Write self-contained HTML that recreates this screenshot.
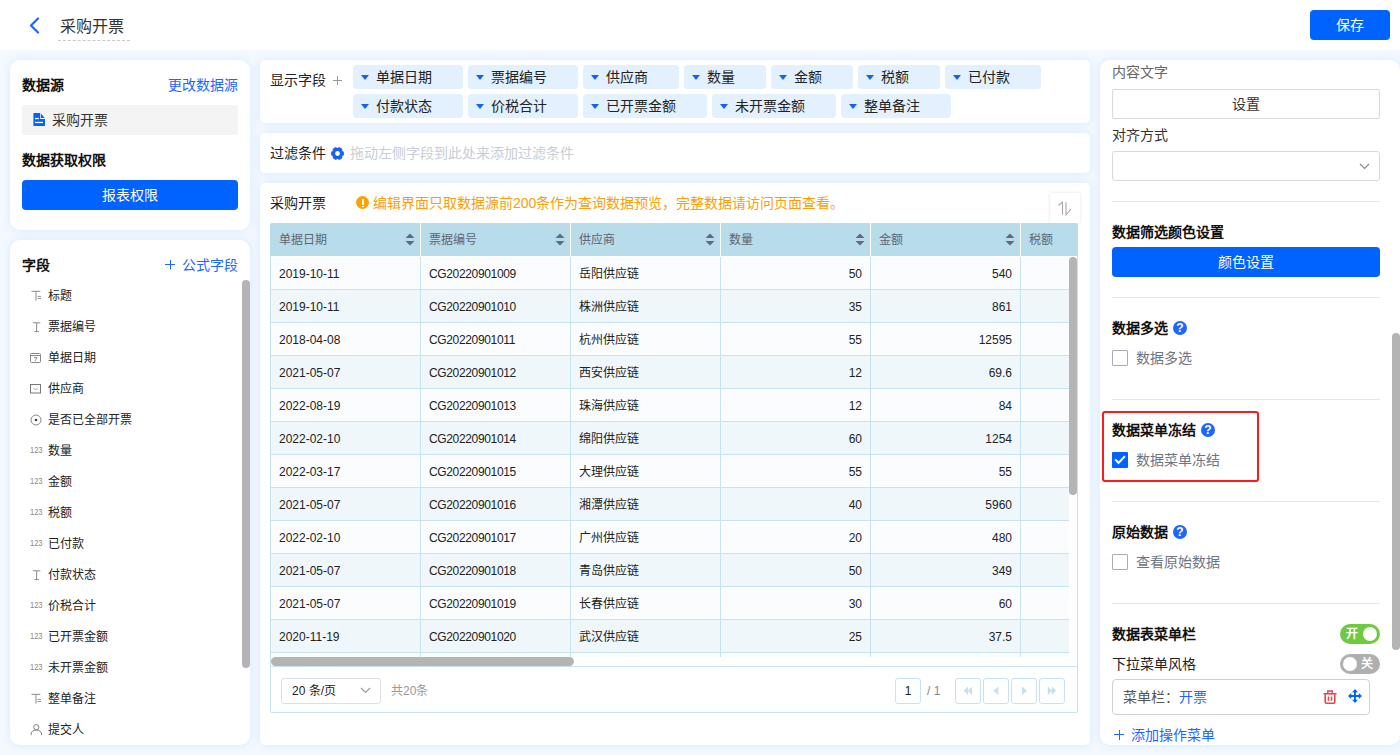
<!DOCTYPE html><html lang="zh-CN"><head><meta charset="utf-8"><style>
*{box-sizing:border-box;margin:0;padding:0}
html,body{width:1400px;height:755px;overflow:hidden}
body{position:relative;background:#F4F9FF;font-family:"Liberation Sans",sans-serif;color:#333;font-size:14px}
.abs{position:absolute}
.t{position:absolute;white-space:nowrap;line-height:16px;height:16px}
.s12{font-size:12px;line-height:14px;height:14px}
.b{font-weight:bold;color:#111}
.panel{position:absolute;background:#fff;box-shadow:0 0 10px rgba(70,150,250,0.16)}
.blue{color:#1F66FF}
.btn{position:absolute;background:#0062FF;color:#fff;border-radius:4px;text-align:center;font-size:14px}
.chip{position:absolute;height:24px;background:#E3F0FD;border-radius:4px}
.chip i{position:absolute;left:8px;top:10px;width:0;height:0;border-left:4px solid transparent;border-right:4px solid transparent;border-top:5px solid #1560F5}
.chip span{position:absolute;left:23px;top:4px;line-height:16px;white-space:nowrap;color:#222}
.div{position:absolute;left:1112px;width:268px;height:1px;background:#E6E6E6}
.q{position:absolute;width:14px;height:14px;border-radius:50%;background:#1F66FF;color:#fff;font-size:11px;line-height:14px;text-align:center;font-weight:bold}
.cb{position:absolute;left:1112px;width:16px;height:16px;border:1px solid #A5ACB8;border-radius:1px;background:#fff}
.sb{position:absolute;background:#B4B4B4;border-radius:4px}
</style></head><body>
<div class="abs" style="left:0;top:0;width:1400px;height:50px;background:#fff"></div>
<svg class="abs" style="left:28px;top:17px" width="12" height="17" viewBox="0 0 12 17"><path d="M10 1.5 L3 8.5 L10 15.5" fill="none" stroke="#1F66FF" stroke-width="2.2" stroke-linecap="round" stroke-linejoin="round"/></svg>
<div class="t" style="left:60px;top:18px;font-size:16px;line-height:18px;height:18px;color:#333">采购开票</div>
<div class="abs" style="left:58px;top:40px;width:72px;height:0;border-top:1px dashed #C8C8C8"></div>
<div class="btn" style="left:1310px;top:10px;width:80px;height:30px;line-height:30px">保存</div>
<div class="panel" style="left:10px;top:60px;width:240px;height:170px;border-radius:10px"></div>
<div class="t b" style="left:22px;top:77px">数据源</div>
<div class="t blue" style="left:168px;top:77px">更改数据源</div>
<div class="abs" style="left:22px;top:105px;width:216px;height:30px;background:#F4F4F4;border-radius:2px"></div>
<svg class="abs" style="left:33px;top:113px" width="12" height="13" viewBox="0 0 12 13"><path d="M0.4 0 H7.2 V6 H12 V13 H0.4 Z" fill="#0062FF"/><path d="M8 0.6 L8 5 L11.6 5 Z" fill="#0062FF"/><rect x="2" y="4.9" width="3.8" height="1.3" fill="#fff"/><rect x="2" y="8.8" width="8" height="1.3" fill="#fff"/></svg>
<div class="t" style="left:52px;top:112px">采购开票</div>
<div class="t b" style="left:22px;top:152px">数据获取权限</div>
<div class="btn" style="left:22px;top:180px;width:216px;height:30px;line-height:30px">报表权限</div>
<div class="panel" style="left:10px;top:240px;width:240px;height:505px;border-radius:10px"></div>
<div class="t b" style="left:22px;top:257px">字段</div>
<svg class="abs" style="left:165px;top:260px" width="10" height="10" viewBox="0 0 10 10"><path d="M5.5 0 V9.5 M0 4.5 H10.5" stroke="#1F66FF" stroke-width="1"/></svg>
<div class="t blue" style="left:182px;top:257px">公式字段</div>
<div class="abs" style="left:30px;top:290.0px;width:12px;height:11px;line-height:11px"><svg width="12" height="12" viewBox="0 0 12 12"><path d="M1.5 1.3 H10.3 M6 1.3 V10.6" stroke="#8A8A8A" stroke-width="1" fill="none"/><path d="M7.5 6.4 H11 M7.5 8.5 H11" stroke="#888" stroke-width="0.9" fill="none"/></svg></div>
<div class="t s12" style="left:48px;top:288.5px;color:#222">标题</div>
<div class="abs" style="left:30px;top:321.0px;width:12px;height:11px;line-height:11px"><svg width="12" height="12" viewBox="0 0 12 12"><path d="M3 1.8 H10.3 M6.6 1.8 V10.6 M4.3 10.6 H8.9" stroke="#8A8A8A" stroke-width="1" fill="none"/></svg></div>
<div class="t s12" style="left:48px;top:319.5px;color:#222">票据编号</div>
<div class="abs" style="left:30px;top:352.0px;width:12px;height:11px;line-height:11px"><svg width="11" height="11" viewBox="0 0 11 11"><rect x="0.5" y="1.5" width="10" height="9" rx="1" stroke="#888" fill="none"/><path d="M0.5 3.5 H10.5" stroke="#888"/><path d="M4 5.5 H7 L5 9" stroke="#888" stroke-width="0.9" fill="none"/></svg></div>
<div class="t s12" style="left:48px;top:350.5px;color:#222">单据日期</div>
<div class="abs" style="left:30px;top:383.0px;width:12px;height:11px;line-height:11px"><svg width="11" height="11" viewBox="0 0 11 11"><rect x="0.5" y="1.5" width="10" height="8.5" stroke="#777" fill="none"/><path d="M3.5 5 L5.5 7 L7.5 5" stroke="#999" stroke-width="0.9" fill="none"/></svg></div>
<div class="t s12" style="left:48px;top:381.5px;color:#222">供应商</div>
<div class="abs" style="left:30px;top:414.0px;width:12px;height:11px;line-height:11px"><svg width="12" height="12" viewBox="0 0 12 12"><circle cx="6" cy="6" r="5" stroke="#888" fill="none"/><circle cx="6" cy="6" r="1.3" fill="#444"/></svg></div>
<div class="t s12" style="left:48px;top:412.5px;color:#222">是否已全部开票</div>
<div class="abs" style="left:30px;top:445.0px;width:12px;height:11px;line-height:11px"><svg width="13" height="11" viewBox="0 0 13 11"><text x="0" y="7.7" font-size="8.4" fill="#888" textLength="12.5" lengthAdjust="spacingAndGlyphs" font-family="Liberation Sans">123</text></svg></div>
<div class="t s12" style="left:48px;top:443.5px;color:#222">数量</div>
<div class="abs" style="left:30px;top:476.0px;width:12px;height:11px;line-height:11px"><svg width="13" height="11" viewBox="0 0 13 11"><text x="0" y="7.7" font-size="8.4" fill="#888" textLength="12.5" lengthAdjust="spacingAndGlyphs" font-family="Liberation Sans">123</text></svg></div>
<div class="t s12" style="left:48px;top:474.5px;color:#222">金额</div>
<div class="abs" style="left:30px;top:507.0px;width:12px;height:11px;line-height:11px"><svg width="13" height="11" viewBox="0 0 13 11"><text x="0" y="7.7" font-size="8.4" fill="#888" textLength="12.5" lengthAdjust="spacingAndGlyphs" font-family="Liberation Sans">123</text></svg></div>
<div class="t s12" style="left:48px;top:505.5px;color:#222">税额</div>
<div class="abs" style="left:30px;top:538.0px;width:12px;height:11px;line-height:11px"><svg width="13" height="11" viewBox="0 0 13 11"><text x="0" y="7.7" font-size="8.4" fill="#888" textLength="12.5" lengthAdjust="spacingAndGlyphs" font-family="Liberation Sans">123</text></svg></div>
<div class="t s12" style="left:48px;top:536.5px;color:#222">已付款</div>
<div class="abs" style="left:30px;top:569.0px;width:12px;height:11px;line-height:11px"><svg width="12" height="12" viewBox="0 0 12 12"><path d="M3 1.8 H10.3 M6.6 1.8 V10.6 M4.3 10.6 H8.9" stroke="#8A8A8A" stroke-width="1" fill="none"/></svg></div>
<div class="t s12" style="left:48px;top:567.5px;color:#222">付款状态</div>
<div class="abs" style="left:30px;top:600.0px;width:12px;height:11px;line-height:11px"><svg width="13" height="11" viewBox="0 0 13 11"><text x="0" y="7.7" font-size="8.4" fill="#888" textLength="12.5" lengthAdjust="spacingAndGlyphs" font-family="Liberation Sans">123</text></svg></div>
<div class="t s12" style="left:48px;top:598.5px;color:#222">价税合计</div>
<div class="abs" style="left:30px;top:631.0px;width:12px;height:11px;line-height:11px"><svg width="13" height="11" viewBox="0 0 13 11"><text x="0" y="7.7" font-size="8.4" fill="#888" textLength="12.5" lengthAdjust="spacingAndGlyphs" font-family="Liberation Sans">123</text></svg></div>
<div class="t s12" style="left:48px;top:629.5px;color:#222">已开票金额</div>
<div class="abs" style="left:30px;top:662.0px;width:12px;height:11px;line-height:11px"><svg width="13" height="11" viewBox="0 0 13 11"><text x="0" y="7.7" font-size="8.4" fill="#888" textLength="12.5" lengthAdjust="spacingAndGlyphs" font-family="Liberation Sans">123</text></svg></div>
<div class="t s12" style="left:48px;top:660.5px;color:#222">未开票金额</div>
<div class="abs" style="left:30px;top:693.0px;width:12px;height:11px;line-height:11px"><svg width="12" height="12" viewBox="0 0 12 12"><path d="M1.5 1.3 H10.3 M6 1.3 V10.6" stroke="#8A8A8A" stroke-width="1" fill="none"/><path d="M7.5 6.4 H11 M7.5 8.5 H11" stroke="#888" stroke-width="0.9" fill="none"/></svg></div>
<div class="t s12" style="left:48px;top:691.5px;color:#222">整单备注</div>
<div class="abs" style="left:30px;top:724.0px;width:12px;height:11px;line-height:11px"><svg width="13" height="12" viewBox="0 0 13 12"><circle cx="6.3" cy="3.2" r="2.6" stroke="#7A7A7A" stroke-width="0.95" fill="none"/><path d="M1 11.2 Q1 6 6.3 6 Q11.6 6 11.6 11.2" stroke="#7A7A7A" stroke-width="0.95" fill="none"/></svg></div>
<div class="t s12" style="left:48px;top:722.5px;color:#222">提交人</div>
<div class="sb" style="left:242px;top:280px;width:8px;height:388px"></div>
<div class="panel" style="left:260px;top:60px;width:830px;height:63px;border-radius:5px"></div>
<div class="t" style="left:270px;top:72px;color:#222">显示字段</div>
<svg class="abs" style="left:333px;top:76px" width="9" height="9" viewBox="0 0 9 9"><path d="M4.5 0 V9 M0 4.5 H9" stroke="#999" stroke-width="1"/></svg>
<div class="chip" style="left:353px;top:65px;width:110px"><i></i><span>单据日期</span></div>
<div class="chip" style="left:468px;top:65px;width:110px"><i></i><span>票据编号</span></div>
<div class="chip" style="left:583px;top:65px;width:96px"><i></i><span>供应商</span></div>
<div class="chip" style="left:684px;top:65px;width:82px"><i></i><span>数量</span></div>
<div class="chip" style="left:771px;top:65px;width:82px"><i></i><span>金额</span></div>
<div class="chip" style="left:858px;top:65px;width:82px"><i></i><span>税额</span></div>
<div class="chip" style="left:945px;top:65px;width:96px"><i></i><span>已付款</span></div>
<div class="chip" style="left:353px;top:94px;width:110px"><i></i><span>付款状态</span></div>
<div class="chip" style="left:468px;top:94px;width:110px"><i></i><span>价税合计</span></div>
<div class="chip" style="left:583px;top:94px;width:124px"><i></i><span>已开票金额</span></div>
<div class="chip" style="left:712px;top:94px;width:124px"><i></i><span>未开票金额</span></div>
<div class="chip" style="left:841px;top:94px;width:110px"><i></i><span>整单备注</span></div>
<div class="panel" style="left:260px;top:133px;width:830px;height:40px;border-radius:5px"></div>
<div class="t" style="left:270px;top:145px;color:#222">过滤条件</div>
<svg class="abs" style="left:331px;top:146.5px" width="13" height="13" viewBox="0 0 13 13"><path d="M10.66 3.90 L12.71 4.95 L12.71 8.05 L10.66 9.10 L10.83 8.80 L10.95 11.10 L8.26 12.65 L6.33 11.40 L6.67 11.40 L4.74 12.65 L2.05 11.10 L2.17 8.80 L2.34 9.10 L0.29 8.05 L0.29 4.95 L2.34 3.90 L2.17 4.20 L2.05 1.90 L4.74 0.35 L6.67 1.60 L6.33 1.60 L8.26 0.35 L10.95 1.90 L10.83 4.20 Z" fill="#1560F5" stroke="#1560F5" stroke-width="0.6" stroke-linejoin="round"/><circle cx="6.5" cy="6.5" r="2.4" fill="#fff"/></svg>
<div class="t" style="left:350px;top:145px;color:#C8CDD6">拖动左侧字段到此处来添加过滤条件</div>
<div class="panel" style="left:260px;top:183px;width:830px;height:562px;border-radius:5px"></div>
<div class="t" style="left:270px;top:195px;color:#222">采购开票</div>
<div class="abs" style="left:356px;top:196px;width:13px;height:13px;border-radius:50%;background:#F9A308"></div>
<div class="abs" style="left:361.6px;top:198.5px;width:2px;height:6px;background:#fff;border-radius:1px"></div>
<div class="abs" style="left:361.6px;top:205.5px;width:2px;height:1.8px;background:#fff"></div>
<div class="t" style="left:373px;top:195px;color:#F7A00A">编辑界面只取数据源前200条作为查询数据预览，完整数据请访问页面查看。</div>
<div class="abs" style="left:1050px;top:193px;width:30px;height:30px;background:#fff;box-shadow:0 0 3px rgba(0,0,0,0.12)"></div>
<svg class="abs" style="left:1057px;top:201px" width="15" height="15" viewBox="0 0 15 15"><path d="M1.5 4.5 L5.5 1.2 L5.5 13.8" stroke="#A8A8A8" stroke-width="1.1" fill="none"/><path d="M9 1.2 L9 13.8 L14 8" stroke="#A8A8A8" stroke-width="1.1" fill="none"/></svg>
<div class="abs" style="left:270px;top:223px;width:808px;height:490px;border:1px solid #C7E3EF;border-radius:2px;background:#fff"></div>
<div class="abs" style="left:270px;top:223px;width:808px;height:33px;background:#B9DCEB;border-radius:2px 2px 0 0"></div>
<div class="t s12" style="left:279px;top:233px;color:#5E6470">单据日期</div>
<div class="abs" style="left:420px;top:223px;width:1px;height:33px;background:#fff"></div>
<svg class="abs" style="left:405px;top:233px" width="10" height="13" viewBox="0 0 10 13"><path d="M5 0.5 L9.5 5 L0.5 5 Z M5 12.5 L9.5 8 L0.5 8 Z" fill="#5F6B80"/></svg>
<div class="t s12" style="left:429px;top:233px;color:#5E6470">票据编号</div>
<div class="abs" style="left:570px;top:223px;width:1px;height:33px;background:#fff"></div>
<svg class="abs" style="left:555px;top:233px" width="10" height="13" viewBox="0 0 10 13"><path d="M5 0.5 L9.5 5 L0.5 5 Z M5 12.5 L9.5 8 L0.5 8 Z" fill="#5F6B80"/></svg>
<div class="t s12" style="left:579px;top:233px;color:#5E6470">供应商</div>
<div class="abs" style="left:720px;top:223px;width:1px;height:33px;background:#fff"></div>
<svg class="abs" style="left:705px;top:233px" width="10" height="13" viewBox="0 0 10 13"><path d="M5 0.5 L9.5 5 L0.5 5 Z M5 12.5 L9.5 8 L0.5 8 Z" fill="#5F6B80"/></svg>
<div class="t s12" style="left:729px;top:233px;color:#5E6470">数量</div>
<div class="abs" style="left:870px;top:223px;width:1px;height:33px;background:#fff"></div>
<svg class="abs" style="left:855px;top:233px" width="10" height="13" viewBox="0 0 10 13"><path d="M5 0.5 L9.5 5 L0.5 5 Z M5 12.5 L9.5 8 L0.5 8 Z" fill="#5F6B80"/></svg>
<div class="t s12" style="left:879px;top:233px;color:#5E6470">金额</div>
<div class="abs" style="left:1020px;top:223px;width:1px;height:33px;background:#fff"></div>
<svg class="abs" style="left:1005px;top:233px" width="10" height="13" viewBox="0 0 10 13"><path d="M5 0.5 L9.5 5 L0.5 5 Z M5 12.5 L9.5 8 L0.5 8 Z" fill="#5F6B80"/></svg>
<div class="t s12" style="left:1029px;top:233px;color:#5E6470">税额</div>
<div class="abs" style="left:271px;top:257px;width:798px;height:400px;overflow:hidden">
<div class="abs" style="left:0;top:0px;width:798px;height:33px;background:#FAFCFE;border-bottom:1px solid #C7E3EF"></div>
<div class="abs" style="left:149px;top:0px;width:1px;height:33px;background:#C7E3EF"></div>
<div class="abs" style="left:299px;top:0px;width:1px;height:33px;background:#C7E3EF"></div>
<div class="abs" style="left:449px;top:0px;width:1px;height:33px;background:#C7E3EF"></div>
<div class="abs" style="left:599px;top:0px;width:1px;height:33px;background:#C7E3EF"></div>
<div class="abs" style="left:749px;top:0px;width:1px;height:33px;background:#C7E3EF"></div>
<div class="t s12" style="left:8px;top:10px;color:#222">2019-10-11</div>
<div class="t s12" style="left:158px;top:10px;color:#222;letter-spacing:-0.35px">CG20220901009</div>
<div class="t s12" style="left:308px;top:10px;color:#222">岳阳供应链</div>
<div class="t s12" style="left:450px;top:10px;width:141px;text-align:right;color:#222">50</div>
<div class="t s12" style="left:600px;top:10px;width:141px;text-align:right;color:#222">540</div>
<div class="abs" style="left:0;top:33px;width:798px;height:33px;background:#EFF7FA;border-bottom:1px solid #C7E3EF"></div>
<div class="abs" style="left:149px;top:33px;width:1px;height:33px;background:#C7E3EF"></div>
<div class="abs" style="left:299px;top:33px;width:1px;height:33px;background:#C7E3EF"></div>
<div class="abs" style="left:449px;top:33px;width:1px;height:33px;background:#C7E3EF"></div>
<div class="abs" style="left:599px;top:33px;width:1px;height:33px;background:#C7E3EF"></div>
<div class="abs" style="left:749px;top:33px;width:1px;height:33px;background:#C7E3EF"></div>
<div class="t s12" style="left:8px;top:43px;color:#222">2019-10-11</div>
<div class="t s12" style="left:158px;top:43px;color:#222;letter-spacing:-0.35px">CG20220901010</div>
<div class="t s12" style="left:308px;top:43px;color:#222">株洲供应链</div>
<div class="t s12" style="left:450px;top:43px;width:141px;text-align:right;color:#222">35</div>
<div class="t s12" style="left:600px;top:43px;width:141px;text-align:right;color:#222">861</div>
<div class="abs" style="left:0;top:66px;width:798px;height:33px;background:#FAFCFE;border-bottom:1px solid #C7E3EF"></div>
<div class="abs" style="left:149px;top:66px;width:1px;height:33px;background:#C7E3EF"></div>
<div class="abs" style="left:299px;top:66px;width:1px;height:33px;background:#C7E3EF"></div>
<div class="abs" style="left:449px;top:66px;width:1px;height:33px;background:#C7E3EF"></div>
<div class="abs" style="left:599px;top:66px;width:1px;height:33px;background:#C7E3EF"></div>
<div class="abs" style="left:749px;top:66px;width:1px;height:33px;background:#C7E3EF"></div>
<div class="t s12" style="left:8px;top:76px;color:#222">2018-04-08</div>
<div class="t s12" style="left:158px;top:76px;color:#222;letter-spacing:-0.35px">CG20220901011</div>
<div class="t s12" style="left:308px;top:76px;color:#222">杭州供应链</div>
<div class="t s12" style="left:450px;top:76px;width:141px;text-align:right;color:#222">55</div>
<div class="t s12" style="left:600px;top:76px;width:141px;text-align:right;color:#222">12595</div>
<div class="abs" style="left:0;top:99px;width:798px;height:33px;background:#EFF7FA;border-bottom:1px solid #C7E3EF"></div>
<div class="abs" style="left:149px;top:99px;width:1px;height:33px;background:#C7E3EF"></div>
<div class="abs" style="left:299px;top:99px;width:1px;height:33px;background:#C7E3EF"></div>
<div class="abs" style="left:449px;top:99px;width:1px;height:33px;background:#C7E3EF"></div>
<div class="abs" style="left:599px;top:99px;width:1px;height:33px;background:#C7E3EF"></div>
<div class="abs" style="left:749px;top:99px;width:1px;height:33px;background:#C7E3EF"></div>
<div class="t s12" style="left:8px;top:109px;color:#222">2021-05-07</div>
<div class="t s12" style="left:158px;top:109px;color:#222;letter-spacing:-0.35px">CG20220901012</div>
<div class="t s12" style="left:308px;top:109px;color:#222">西安供应链</div>
<div class="t s12" style="left:450px;top:109px;width:141px;text-align:right;color:#222">12</div>
<div class="t s12" style="left:600px;top:109px;width:141px;text-align:right;color:#222">69.6</div>
<div class="abs" style="left:0;top:132px;width:798px;height:33px;background:#FAFCFE;border-bottom:1px solid #C7E3EF"></div>
<div class="abs" style="left:149px;top:132px;width:1px;height:33px;background:#C7E3EF"></div>
<div class="abs" style="left:299px;top:132px;width:1px;height:33px;background:#C7E3EF"></div>
<div class="abs" style="left:449px;top:132px;width:1px;height:33px;background:#C7E3EF"></div>
<div class="abs" style="left:599px;top:132px;width:1px;height:33px;background:#C7E3EF"></div>
<div class="abs" style="left:749px;top:132px;width:1px;height:33px;background:#C7E3EF"></div>
<div class="t s12" style="left:8px;top:142px;color:#222">2022-08-19</div>
<div class="t s12" style="left:158px;top:142px;color:#222;letter-spacing:-0.35px">CG20220901013</div>
<div class="t s12" style="left:308px;top:142px;color:#222">珠海供应链</div>
<div class="t s12" style="left:450px;top:142px;width:141px;text-align:right;color:#222">12</div>
<div class="t s12" style="left:600px;top:142px;width:141px;text-align:right;color:#222">84</div>
<div class="abs" style="left:0;top:165px;width:798px;height:33px;background:#EFF7FA;border-bottom:1px solid #C7E3EF"></div>
<div class="abs" style="left:149px;top:165px;width:1px;height:33px;background:#C7E3EF"></div>
<div class="abs" style="left:299px;top:165px;width:1px;height:33px;background:#C7E3EF"></div>
<div class="abs" style="left:449px;top:165px;width:1px;height:33px;background:#C7E3EF"></div>
<div class="abs" style="left:599px;top:165px;width:1px;height:33px;background:#C7E3EF"></div>
<div class="abs" style="left:749px;top:165px;width:1px;height:33px;background:#C7E3EF"></div>
<div class="t s12" style="left:8px;top:175px;color:#222">2022-02-10</div>
<div class="t s12" style="left:158px;top:175px;color:#222;letter-spacing:-0.35px">CG20220901014</div>
<div class="t s12" style="left:308px;top:175px;color:#222">绵阳供应链</div>
<div class="t s12" style="left:450px;top:175px;width:141px;text-align:right;color:#222">60</div>
<div class="t s12" style="left:600px;top:175px;width:141px;text-align:right;color:#222">1254</div>
<div class="abs" style="left:0;top:198px;width:798px;height:33px;background:#FAFCFE;border-bottom:1px solid #C7E3EF"></div>
<div class="abs" style="left:149px;top:198px;width:1px;height:33px;background:#C7E3EF"></div>
<div class="abs" style="left:299px;top:198px;width:1px;height:33px;background:#C7E3EF"></div>
<div class="abs" style="left:449px;top:198px;width:1px;height:33px;background:#C7E3EF"></div>
<div class="abs" style="left:599px;top:198px;width:1px;height:33px;background:#C7E3EF"></div>
<div class="abs" style="left:749px;top:198px;width:1px;height:33px;background:#C7E3EF"></div>
<div class="t s12" style="left:8px;top:208px;color:#222">2022-03-17</div>
<div class="t s12" style="left:158px;top:208px;color:#222;letter-spacing:-0.35px">CG20220901015</div>
<div class="t s12" style="left:308px;top:208px;color:#222">大理供应链</div>
<div class="t s12" style="left:450px;top:208px;width:141px;text-align:right;color:#222">55</div>
<div class="t s12" style="left:600px;top:208px;width:141px;text-align:right;color:#222">55</div>
<div class="abs" style="left:0;top:231px;width:798px;height:33px;background:#EFF7FA;border-bottom:1px solid #C7E3EF"></div>
<div class="abs" style="left:149px;top:231px;width:1px;height:33px;background:#C7E3EF"></div>
<div class="abs" style="left:299px;top:231px;width:1px;height:33px;background:#C7E3EF"></div>
<div class="abs" style="left:449px;top:231px;width:1px;height:33px;background:#C7E3EF"></div>
<div class="abs" style="left:599px;top:231px;width:1px;height:33px;background:#C7E3EF"></div>
<div class="abs" style="left:749px;top:231px;width:1px;height:33px;background:#C7E3EF"></div>
<div class="t s12" style="left:8px;top:241px;color:#222">2021-05-07</div>
<div class="t s12" style="left:158px;top:241px;color:#222;letter-spacing:-0.35px">CG20220901016</div>
<div class="t s12" style="left:308px;top:241px;color:#222">湘潭供应链</div>
<div class="t s12" style="left:450px;top:241px;width:141px;text-align:right;color:#222">40</div>
<div class="t s12" style="left:600px;top:241px;width:141px;text-align:right;color:#222">5960</div>
<div class="abs" style="left:0;top:264px;width:798px;height:33px;background:#FAFCFE;border-bottom:1px solid #C7E3EF"></div>
<div class="abs" style="left:149px;top:264px;width:1px;height:33px;background:#C7E3EF"></div>
<div class="abs" style="left:299px;top:264px;width:1px;height:33px;background:#C7E3EF"></div>
<div class="abs" style="left:449px;top:264px;width:1px;height:33px;background:#C7E3EF"></div>
<div class="abs" style="left:599px;top:264px;width:1px;height:33px;background:#C7E3EF"></div>
<div class="abs" style="left:749px;top:264px;width:1px;height:33px;background:#C7E3EF"></div>
<div class="t s12" style="left:8px;top:274px;color:#222">2022-02-10</div>
<div class="t s12" style="left:158px;top:274px;color:#222;letter-spacing:-0.35px">CG20220901017</div>
<div class="t s12" style="left:308px;top:274px;color:#222">广州供应链</div>
<div class="t s12" style="left:450px;top:274px;width:141px;text-align:right;color:#222">20</div>
<div class="t s12" style="left:600px;top:274px;width:141px;text-align:right;color:#222">480</div>
<div class="abs" style="left:0;top:297px;width:798px;height:33px;background:#EFF7FA;border-bottom:1px solid #C7E3EF"></div>
<div class="abs" style="left:149px;top:297px;width:1px;height:33px;background:#C7E3EF"></div>
<div class="abs" style="left:299px;top:297px;width:1px;height:33px;background:#C7E3EF"></div>
<div class="abs" style="left:449px;top:297px;width:1px;height:33px;background:#C7E3EF"></div>
<div class="abs" style="left:599px;top:297px;width:1px;height:33px;background:#C7E3EF"></div>
<div class="abs" style="left:749px;top:297px;width:1px;height:33px;background:#C7E3EF"></div>
<div class="t s12" style="left:8px;top:307px;color:#222">2021-05-07</div>
<div class="t s12" style="left:158px;top:307px;color:#222;letter-spacing:-0.35px">CG20220901018</div>
<div class="t s12" style="left:308px;top:307px;color:#222">青岛供应链</div>
<div class="t s12" style="left:450px;top:307px;width:141px;text-align:right;color:#222">50</div>
<div class="t s12" style="left:600px;top:307px;width:141px;text-align:right;color:#222">349</div>
<div class="abs" style="left:0;top:330px;width:798px;height:33px;background:#FAFCFE;border-bottom:1px solid #C7E3EF"></div>
<div class="abs" style="left:149px;top:330px;width:1px;height:33px;background:#C7E3EF"></div>
<div class="abs" style="left:299px;top:330px;width:1px;height:33px;background:#C7E3EF"></div>
<div class="abs" style="left:449px;top:330px;width:1px;height:33px;background:#C7E3EF"></div>
<div class="abs" style="left:599px;top:330px;width:1px;height:33px;background:#C7E3EF"></div>
<div class="abs" style="left:749px;top:330px;width:1px;height:33px;background:#C7E3EF"></div>
<div class="t s12" style="left:8px;top:340px;color:#222">2021-05-07</div>
<div class="t s12" style="left:158px;top:340px;color:#222;letter-spacing:-0.35px">CG20220901019</div>
<div class="t s12" style="left:308px;top:340px;color:#222">长春供应链</div>
<div class="t s12" style="left:450px;top:340px;width:141px;text-align:right;color:#222">30</div>
<div class="t s12" style="left:600px;top:340px;width:141px;text-align:right;color:#222">60</div>
<div class="abs" style="left:0;top:363px;width:798px;height:33px;background:#EFF7FA;border-bottom:1px solid #C7E3EF"></div>
<div class="abs" style="left:149px;top:363px;width:1px;height:33px;background:#C7E3EF"></div>
<div class="abs" style="left:299px;top:363px;width:1px;height:33px;background:#C7E3EF"></div>
<div class="abs" style="left:449px;top:363px;width:1px;height:33px;background:#C7E3EF"></div>
<div class="abs" style="left:599px;top:363px;width:1px;height:33px;background:#C7E3EF"></div>
<div class="abs" style="left:749px;top:363px;width:1px;height:33px;background:#C7E3EF"></div>
<div class="t s12" style="left:8px;top:373px;color:#222">2020-11-19</div>
<div class="t s12" style="left:158px;top:373px;color:#222;letter-spacing:-0.35px">CG20220901020</div>
<div class="t s12" style="left:308px;top:373px;color:#222">武汉供应链</div>
<div class="t s12" style="left:450px;top:373px;width:141px;text-align:right;color:#222">25</div>
<div class="t s12" style="left:600px;top:373px;width:141px;text-align:right;color:#222">37.5</div>
<div class="abs" style="left:0;top:396px;width:798px;height:33px;background:#FAFCFE;border-bottom:1px solid #C7E3EF"></div>
<div class="abs" style="left:149px;top:396px;width:1px;height:33px;background:#C7E3EF"></div>
<div class="abs" style="left:299px;top:396px;width:1px;height:33px;background:#C7E3EF"></div>
<div class="abs" style="left:449px;top:396px;width:1px;height:33px;background:#C7E3EF"></div>
<div class="abs" style="left:599px;top:396px;width:1px;height:33px;background:#C7E3EF"></div>
<div class="abs" style="left:749px;top:396px;width:1px;height:33px;background:#C7E3EF"></div>
<div class="t s12" style="left:8px;top:406px;color:#222"></div>
<div class="t s12" style="left:158px;top:406px;color:#222;letter-spacing:-0.35px"></div>
<div class="t s12" style="left:308px;top:406px;color:#222"></div>
<div class="t s12" style="left:450px;top:406px;width:141px;text-align:right;color:#222"></div>
<div class="t s12" style="left:600px;top:406px;width:141px;text-align:right;color:#222"></div>
</div>
<div class="sb" style="left:1069px;top:257px;width:8px;height:238px"></div>
<div class="abs" style="left:271px;top:657px;width:806px;height:9px;background:#fff"></div>
<div class="sb" style="left:271px;top:657px;width:303px;height:9px;border-radius:5px"></div>
<div class="abs" style="left:271px;top:666px;width:806px;height:1px;background:#C7E3EF"></div>
<div class="abs" style="left:281px;top:678px;width:100px;height:26px;border:1px solid #DCDFE6;border-radius:3px;background:#fff"></div>
<div class="t s12" style="left:292px;top:684px;color:#222">20 条/页</div>
<svg class="abs" style="left:360px;top:687px" width="11" height="7" viewBox="0 0 11 7"><path d="M1 1 L5.5 5.5 L10 1" stroke="#999" stroke-width="1.1" fill="none"/></svg>
<div class="t s12" style="left:391px;top:684px;color:#999">共20条</div>
<div class="abs" style="left:895px;top:678px;width:26px;height:26px;border:1px solid #C7E3EF;border-radius:3px;background:#fff;text-align:center;line-height:24px;font-size:12px;color:#222">1</div>
<div class="t s12" style="left:927px;top:684px;color:#888">/ 1</div>
<div class="abs" style="left:955px;top:678px;width:26px;height:26px;border:1px solid #C7E3EF;border-radius:3px;background:#fff"></div>
<svg class="abs" style="left:961px;top:684px" width="14" height="13" viewBox="0 0 14 13"><path d="M7 2.5 L2.7 6.75 L7 11 Z M11.1 2.5 L6.8 6.75 L11.1 11 Z" fill="#C3E2ED"/></svg>
<div class="abs" style="left:983px;top:678px;width:26px;height:26px;border:1px solid #C7E3EF;border-radius:3px;background:#fff"></div>
<svg class="abs" style="left:989px;top:684px" width="14" height="13" viewBox="0 0 14 13"><path d="M9.4 2.5 L4.3 6.75 L9.4 11 Z" fill="#C3E2ED"/></svg>
<div class="abs" style="left:1011px;top:678px;width:26px;height:26px;border:1px solid #C7E3EF;border-radius:3px;background:#fff"></div>
<svg class="abs" style="left:1017px;top:684px" width="14" height="13" viewBox="0 0 14 13"><path d="M5 2.5 L10 6.75 L5 11 Z" fill="#C3E2ED"/></svg>
<div class="abs" style="left:1039px;top:678px;width:26px;height:26px;border:1px solid #C7E3EF;border-radius:3px;background:#fff"></div>
<svg class="abs" style="left:1045px;top:684px" width="14" height="13" viewBox="0 0 14 13"><path d="M2.7 2.5 L7 6.75 L2.7 11 Z M6.8 2.5 L11.1 6.75 L6.8 11 Z" fill="#C3E2ED"/></svg>
<div class="panel" style="left:1100px;top:60px;width:300px;height:685px;border-radius:10px"></div>
<div class="t" style="left:1112px;top:63.5px;color:#666">内容文字</div>
<div class="abs" style="left:1112px;top:89px;width:268px;height:30px;border:1px solid #D9D9D9;border-radius:2px;text-align:center;line-height:28px;color:#333">设置</div>
<div class="t" style="left:1112px;top:126.5px;color:#333">对齐方式</div>
<div class="abs" style="left:1112px;top:151px;width:268px;height:30px;border:1px solid #D9D9D9;border-radius:3px"></div>
<svg class="abs" style="left:1359px;top:163px" width="11" height="7" viewBox="0 0 11 7"><path d="M1 1 L5.5 5.5 L10 1" stroke="#888" stroke-width="1.1" fill="none"/></svg>
<div class="div" style="top:201px"></div>
<div class="t b" style="left:1112px;top:224px">数据筛选颜色设置</div>
<div class="btn" style="left:1112px;top:247px;width:268px;height:30px;line-height:30px">颜色设置</div>
<div class="div" style="top:297px"></div>
<div class="t b" style="left:1112px;top:320px">数据多选</div>
<div class="q" style="font-size:12px;left:1173px;top:320.8px">?</div>
<div class="cb" style="top:350px"></div>
<div class="t" style="left:1136px;top:350px;color:#6E7482">数据多选</div>
<div class="div" style="top:399px"></div>
<div class="abs" style="left:1102px;top:411px;width:157px;height:71px;border:2px solid #FF1A1A;border-radius:3px"></div>
<div class="t b" style="left:1112px;top:422px">数据菜单冻结</div>
<div class="q" style="font-size:12px;left:1201px;top:423px">?</div>
<div class="abs" style="left:1112px;top:452px;width:16px;height:16px;background:#0062FF;border-radius:1px"></div>
<svg class="abs" style="left:1112px;top:452px" width="16" height="16" viewBox="0 0 16 16"><path d="M3.2 7.3 L6.5 11 L12.9 4.3" stroke="#fff" stroke-width="2" fill="none"/></svg>
<div class="t" style="left:1136px;top:452px;color:#6E7482">数据菜单冻结</div>
<div class="div" style="top:501px"></div>
<div class="t b" style="left:1112px;top:524px">原始数据</div>
<div class="q" style="font-size:12px;left:1173px;top:525px">?</div>
<div class="cb" style="top:554px"></div>
<div class="t" style="left:1136px;top:554px;color:#6E7482">查看原始数据</div>
<div class="div" style="top:603px"></div>
<div class="t b" style="left:1112px;top:626px">数据表菜单栏</div>
<div class="abs" style="left:1340px;top:624px;width:40px;height:20px;border-radius:10px;background:#6ECB3F"></div>
<div class="t" style="left:1346px;top:627px;color:#fff;font-size:12px;line-height:14px;font-weight:bold">开</div>
<div class="abs" style="left:1363px;top:627px;width:14px;height:14px;border-radius:50%;background:#fff"></div>
<div class="t" style="left:1112px;top:656px;color:#222">下拉菜单风格</div>
<div class="abs" style="left:1340px;top:654px;width:40px;height:20px;border-radius:10px;background:#AFAFAF"></div>
<div class="abs" style="left:1343px;top:657px;width:14px;height:14px;border-radius:50%;background:#fff"></div>
<div class="t" style="left:1361px;top:657px;color:#fff;font-size:12px;line-height:14px;font-weight:bold">关</div>
<div class="abs" style="left:1112px;top:679px;width:258px;height:36px;border:1px solid #D0D0D0;border-radius:4px"></div>
<div class="t" style="left:1123px;top:689px;color:#555">菜单栏：</div>
<div class="t blue" style="left:1179px;top:689px">开票</div>
<svg class="abs" style="left:1323px;top:690px" width="14" height="14" viewBox="0 0 14 14"><path d="M4.8 3 V1 H9.2 V3" stroke="#E2464F" stroke-width="1.5" fill="none"/><path d="M0.5 3.8 H13.5" stroke="#E2464F" stroke-width="1.6"/><path d="M2.2 4.5 V12 Q2.2 13.2 3.4 13.2 H10.6 Q11.8 13.2 11.8 12 V4.5" stroke="#E2464F" stroke-width="1.6" fill="none"/><path d="M5.5 6.5 V10.8 M8.5 6.5 V10.8" stroke="#E2464F" stroke-width="1.5"/></svg>
<svg class="abs" style="left:1348px;top:689.3px" width="14" height="14" viewBox="0 0 14 14"><path d="M7 1 V13 M1 7 H13" stroke="#0062FF" stroke-width="1.9"/><path d="M7 0 L10 3.2 H4 Z M7 14 L10 10.8 H4 Z M0 7 L3.2 4 V10 Z M14 7 L10.8 4 V10 Z" fill="#0062FF"/></svg>
<svg class="abs" style="left:1114px;top:730px" width="10" height="10" viewBox="0 0 10 10"><path d="M5.5 0 V10 M0 4.5 H10" stroke="#1F66FF" stroke-width="1"/></svg>
<div class="t blue" style="left:1131px;top:727px">添加操作菜单</div>
<div class="sb" style="left:1392px;top:333px;width:8px;height:317px"></div>
</body></html>
